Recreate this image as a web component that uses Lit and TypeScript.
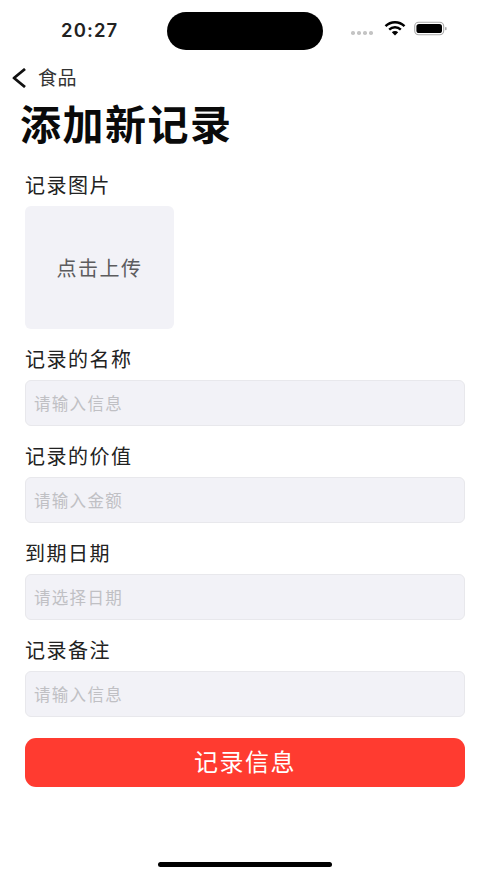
import { LitElement, html, css, svg } from "lit";
import { customElement } from "lit/decorators.js";

const fields = [
  { label: "记录的名称", hint: "请输入信息" },
  { label: "记录的价值", hint: "请输入金额" },
  { label: "到期日期", hint: "请选择日期" },
  { label: "记录备注", hint: "请输入信息" },
];

@customElement("app-root")
export class AppRoot extends LitElement {
  static styles = css`
    :host { display: block; width: 490px; height: 876px; background: #fff; overflow: hidden; font-family: "Noto Sans CJK SC", "Liberation Sans", sans-serif; color: #1c1c1e; }
    .screen { display: flex; flex-direction: column; height: 876px; box-sizing: border-box; position: relative; }
    .status { display: flex; align-items: center; height: 38px; margin-top: 12px; padding-left: 61px; flex: none; }
    .time { width: 106px; font-family: Inter, "Liberation Sans", sans-serif; font-weight: 600; font-size: 18.5px; letter-spacing: 1.1px; color: #222; line-height: 38px; margin-top: -2px; }
    .island { width: 156px; height: 38px; border-radius: 19px; background: #000; flex: none; }
    .sys { display: flex; align-items: center; margin-left: 28px; margin-top: -5px; }
    .dots { display: flex; gap: 2.4px; margin-top: 9px; margin-right: 11px; }
    .dots i { width: 3.6px; height: 3.6px; border-radius: 50%; background: #c4c4c4; display: block; }
    .sys svg { display: block; }
    .nav { display: flex; align-items: center; height: 20px; margin-top: 18px; padding-left: 12px; flex: none; }
    .nav svg { display: block; }
    .nav span { margin-left: 12px; font-size: 19px; line-height: 20px; color: #333; letter-spacing: 0.5px; margin-top: -3px; }
    h1 { margin: 13px 0 0 20px; font-size: 41px; line-height: 42px; font-weight: 700; letter-spacing: 1.5px; color: #0a0a0a; flex: none; }
    .form { display: flex; flex-direction: column; padding: 0 25px; margin-top: 30px; }
    .label { font-size: 20px; line-height: 24px; height: 24px; letter-spacing: 1.5px; color: #222; }
    .upload { width: 149px; height: 123px; margin-top: 9px; background: #f2f2f7; border-radius: 6px; display: flex; align-items: center; justify-content: center; font-size: 20px; letter-spacing: 1.5px; color: #5c5c5e; }
    .field { margin-top: 18px; display: flex; flex-direction: column; }
    .input { margin-top: 9px; height: 46px; box-sizing: border-box; background: #f2f2f7; border: 1px solid #e8e8ec; border-radius: 6px; padding-left: 8px; display: flex; align-items: center; font-size: 16.5px; letter-spacing: 1.3px; color: #c0c0c4; }
    .btn { margin-top: 21px; height: 49px; background: #ff3b30; border-radius: 11px; display: flex; align-items: center; justify-content: center; color: #fff; font-size: 24px; letter-spacing: 1.5px; padding-bottom: 4px; box-sizing: border-box; }
    .home { position: absolute; left: 158px; top: 862px; width: 174px; height: 5px; border-radius: 3px; background: #000; }
  `;

  render() {
    return html`
      <div class="screen">
        <div class="status">
          <div class="time">20:27</div>
          <div class="island"></div>
          <div class="sys">
            <div class="dots"><i></i><i></i><i></i><i></i></div>
            <svg width="22" height="15" viewBox="0 0 22 15">
              ${svg`<path d="M1.5 5.2 A13.5 13.5 0 0 1 20.5 5.2" fill="none" stroke="#000" stroke-width="2.4"/>
              <path d="M5.2 8.6 A8.2 8.2 0 0 1 16.8 8.6" fill="none" stroke="#000" stroke-width="2.4"/>
              <path d="M11 14.5 L7.8 11.2 A4.6 4.6 0 0 1 14.2 11.2 Z" fill="#000"/>`}
            </svg>
            <svg width="34" height="15" viewBox="0 0 34 15" style="margin-left:8px">
              ${svg`<rect x="0.7" y="1.2" width="29" height="12.6" rx="4" fill="none" stroke="#aaa" stroke-width="1.1"/>
              <rect x="2.4" y="2.9" width="25.6" height="9.2" rx="2.6" fill="#000"/>
              <rect x="31" y="6" width="1.6" height="3.2" rx="0.8" fill="#aaa"/>`}
            </svg>
          </div>
        </div>
        <div class="nav">
          <svg width="14" height="20" viewBox="0 0 14 20">
            ${svg`<path d="M13 1 L2 10 L13 19" fill="none" stroke="#111" stroke-width="2.8" stroke-linejoin="round"/>`}
          </svg>
          <span>食品</span>
        </div>
        <h1>添加新记录</h1>
        <div class="form">
          <div class="label">记录图片</div>
          <div class="upload">点击上传</div>
          ${fields.map(
            (f) => html`<div class="field">
              <div class="label">${f.label}</div>
              <div class="input">${f.hint}</div>
            </div>`
          )}
          <div class="btn">记录信息</div>
        </div>
        <div class="home"></div>
      </div>
    `;
  }
}
